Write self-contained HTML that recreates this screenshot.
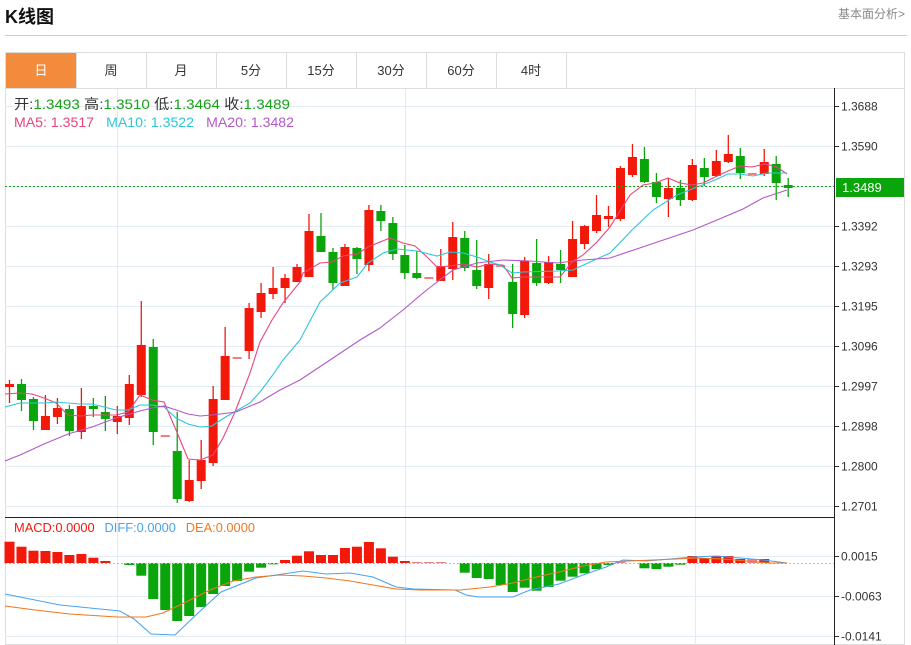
<!DOCTYPE html>
<html><head><meta charset="utf-8"><style>
body{margin:0;background:#fff;width:911px;height:645px;overflow:hidden;font-family:"Liberation Sans","Noto Sans CJK SC",sans-serif;}
</style></head><body>
<svg id="s" width="911" height="645" xmlns="http://www.w3.org/2000/svg" style="position:absolute;left:0;top:0;font-family:'Liberation Sans','Noto Sans CJK SC',sans-serif">
<text x="5" y="23" font-size="18" font-weight="bold" fill="#111">K线图</text>
<text x="905" y="18" font-size="12" fill="#888" text-anchor="end">基本面分析&gt;</text>
<line x1="5" y1="35.5" x2="907" y2="35.5" stroke="#ccc"/>
<rect x="5.5" y="52.5" width="899" height="592" fill="none" stroke="#ddd"/>
<line x1="5" y1="88.5" x2="905" y2="88.5" stroke="#ddd"/>
<rect x="6" y="53" width="70" height="35" fill="#f28b3c"/>
<g stroke="#ddd"><line x1="76.5" y1="53" x2="76.5" y2="88"/><line x1="146.5" y1="53" x2="146.5" y2="88"/><line x1="216.5" y1="53" x2="216.5" y2="88"/><line x1="286.5" y1="53" x2="286.5" y2="88"/><line x1="356.5" y1="53" x2="356.5" y2="88"/><line x1="426.5" y1="53" x2="426.5" y2="88"/><line x1="496.5" y1="53" x2="496.5" y2="88"/><line x1="566.5" y1="53" x2="566.5" y2="88"/></g>
<g font-size="13" text-anchor="middle" fill="#333"><text x="41" y="75" fill="#fff">日</text><text x="111" y="75">周</text><text x="181" y="75">月</text><text x="251" y="75">5分</text><text x="321" y="75">15分</text><text x="391" y="75">30分</text><text x="461" y="75">60分</text><text x="531" y="75">4时</text></g>
<g id="grid" stroke="#e3ecf4"></g>
<g id="cand"></g>
<g id="ma" fill="none" stroke-width="1.1"></g>
<line x1="5" y1="186.5" x2="835" y2="186.5" stroke="#19a019" stroke-dasharray="2,2"/>
<line x1="834.5" y1="88" x2="834.5" y2="645" stroke="#222"/>
<line x1="5" y1="517.5" x2="835" y2="517.5" stroke="#222"/>
<g id="ax" font-size="12" fill="#333"></g>
<rect x="836" y="178" width="68" height="19" fill="#0aa50a"/>
<text x="842" y="192" font-size="13" fill="#fff">1.3489</text>
<text x="14" y="109" font-size="14" fill="#333" textLength="276" lengthAdjust="spacingAndGlyphs">开:<tspan fill="#19a019">1.3493</tspan>  高:<tspan fill="#19a019">1.3510</tspan>  低:<tspan fill="#19a019">1.3464</tspan>  收:<tspan fill="#19a019">1.3489</tspan></text>
<text x="14" y="127" font-size="14" textLength="280" lengthAdjust="spacingAndGlyphs"><tspan fill="#e8457b">MA5: 1.3517</tspan><tspan fill="#2ec5da" dx="12">MA10: 1.3522</tspan><tspan fill="#b457c8" dx="12">MA20: 1.3482</tspan></text>
<text x="14" y="532" font-size="13" textLength="241" lengthAdjust="spacingAndGlyphs"><tspan fill="#f2190a">MACD:0.0000</tspan><tspan fill="#4aa3f0" dx="10">DIFF:0.0000</tspan><tspan fill="#f07820" dx="10">DEA:0.0000</tspan></text>
</svg>
<script>
var NS="http://www.w3.org/2000/svg";
function el(p,t,a){var e=document.createElementNS(NS,t);for(var k in a)e.setAttribute(k,a[k]);document.getElementById(p).appendChild(e);return e;}
var g=[106,146,186,226,266,306,346,386,426,466,506,556,596,636];
g.forEach(function(y){el("grid","line",{x1:5,x2:834,y1:y+.5,y2:y+.5});});
[117,405,695].forEach(function(x){el("grid","line",{x1:x+.5,x2:x+.5,y1:89,y2:645});});
var labs=[[106,"1.3688"],[146,"1.3590"],[226,"1.3392"],[266,"1.3293"],[306,"1.3195"],[346,"1.3096"],[386,"1.2997"],[426,"1.2898"],[466,"1.2800"],[506,"1.2701"],[556,"0.0015"],[596,"-0.0063"],[636,"-0.0141"]];
labs.forEach(function(l){el("ax","line",{x1:835,x2:839,y1:l[0]+.5,y2:l[0]+.5,stroke:"#333"});var t=el("ax","text",{x:841,y:l[0]+4.5});t.textContent=l[1];});
var C=[["r",384,387,380,403],["g",384,400,379,411],["g",399,421,397,430],["r",416,430,395,430],["r",408,417,398,424],["g",409,431,405,436],["r",406,432,388,439],["g",406,409,398,417],["g",412,419,396,431],["r",416,422,406,434],
["r",384,418,375,425],["r",345,395,301,397],["g",347,432,339,445],["d",435,436,435,436],["g",451,499,412,503],["r",480,501,460,502],["r",460,481,440,489],["r",399,463,386,466],["r",356,400,327,400],["d",357,358,357,358],
["r",308,351,303,359],["r",293,312,283,318],["r",288,294,267,299],["r",278,288,274,303],["r",267,282,264,282],["r",231,277,214,277],["g",236,252,213,252],["g",252,283,248,290],["r",247,286,244,286],["g",248,259,247,274],
["r",210,265,205,271],["g",211,221,205,231],["g",223,254,217,260],["g",255,273,245,279],["g",273,278,251,279],["d",277,278,277,278],["r",266,281,249,281],["r",237,269,222,280],["g",238,268,231,271],["g",270,286,240,289],
["r",264,288,254,299],["d",265,266,265,266],["g",282,314,264,328],["r",261,315,257,318],["g",263,283,239,286],["r",262,283,256,284],["g",264,270,250,283],["r",239,277,221,277],["r",226,244,225,249],["r",215,231,195,233],
["r",216,219,206,227],["r",168,219,166,221],["r",157,175,144,177],["g",159,182,147,183],["g",182,197,173,203],["r",188,199,178,217],["g",188,200,180,206],["r",165,200,159,201],["g",168,177,158,186],["r",161,176,150,177],
["r",154,162,135,163],["g",156,173,148,179],["d",173,174,173,174],["r",162,174,149,176],["g",164,183,156,200],["g",185,188,178,197]];
C.forEach(function(c,i){var x=9.5+i*11.98;var col=c[0]=="r"?"#f2190a":c[0]=="g"?"#0aa50a":"#f08080";
 if(c[0]!="d")el("cand","line",{x1:x,x2:x,y1:c[3],y2:c[4],stroke:col,"stroke-width":1.3});
 el("cand","rect",{x:x-4.5,y:c[1],width:9,height:Math.max(2,c[2]-c[1]),fill:col});});
function pl(pts,col){el("ma","polyline",{points:pts,stroke:col});}
pl("5,394 20,393 32,394 44,398 56,403 68,415 80,416 92,415 104,415 116,415 128,412 140,395 152,400 164,402 176,430 188,459 200,460 213,455 223,438 235,412 250,373 260,342 272,320 283,303 300,282 303,273 320,263 332,262 343,256 357,254 368,247 390,238 403,243 415,246 427,257 437,267 450,266 463,264 477,267 490,264 503,265 512,278 523,277 537,277 548,277 560,277 572,262 583,255 597,242 610,227 630,195 643,185 655,183 668,178 680,183 692,185 703,183 715,177 728,171 740,166 752,167 765,164 777,167 787,174","#e8457b");
pl("5,407 20,403 44,403 56,402 80,404 92,404 104,407 116,410 128,410 140,405 152,405 164,407 176,418 188,424 200,427 212,426 224,418 236,411 250,403 260,392 272,376 283,360 300,340 320,302 340,283 357,277 368,263 383,253 397,249 417,251 437,256 450,252 463,253 477,257 490,262 500,265 512,273 523,272 557,271 573,270 590,262 610,253 633,229 653,210 677,195 697,187 715,180 728,174 740,174 753,176 767,173 787,173","#2ec5da");
pl("5,461 20,455 44,444 68,434 92,427 116,418 140,411 152,408 164,406 176,410 188,414 200,416 212,415 236,412 260,402 280,390 300,380 360,340 380,328 403,310 423,293 437,282 453,270 477,263 503,260 530,261 557,263 583,260 610,258 693,230 717,220 743,209 763,198 787,190","#b457c8");
el("ma","line",{x1:5,x2:834,y1:563.5,y2:563.5,stroke:"#8fc8dd","stroke-dasharray":"2,2"});
var M=[541.7,546.7,550.7,551,552,555,554,557.7,561,563,565,575.7,599,610,621,616,607,594,586,581,571.7,567.7,564.3,560,555.7,551.3,555,555,548,546.7,542,548.3,556.7,561,-562,-562,-562,563,572.7,578,579,585,592,587.7,590.7,587,580.7,576.7,573.3,569,565,-561.7,563,568.3,569,566.7,564.7,556,558.3,556,556,559,-559,559,563,563];
M.forEach(function(v,i){var x=9.5+i*11.98;var light=v<0;v=Math.abs(v);if(Math.abs(v-563)<0.5)return;
 var col=v<563?(light?"#f08080":"#f2190a"):"#0aa50a";var y=Math.min(v,563),h=Math.abs(v-563);
 el("cand","rect",{x:x-5,y:y,width:10,height:Math.max(1,h),fill:col});});
pl("5,594 60,605 120,611 134,619 151,634 175,635 198,613 221,592 256,578 303,571 326,574 350,573 373,577 396,587 414,589 455,590 466,595 478,597 513,597 530,590 559,584 583,575 606,567 623,560 647,561 670,559 693,557 717,556 740,558 763,560 787,563","#4aa3f0");
pl("5,606 35,610 70,614 117,617 146,617 163,613 186,602 210,590 233,581 256,577 280,575 303,576 326,578 350,581 373,585 396,589 420,590 460,590 490,587 513,583 536,577 559,572 583,566 606,562 629,561 653,560 676,559 699,558 723,559 746,561 769,563 787,563","#f07820");
</script>
</body></html>
